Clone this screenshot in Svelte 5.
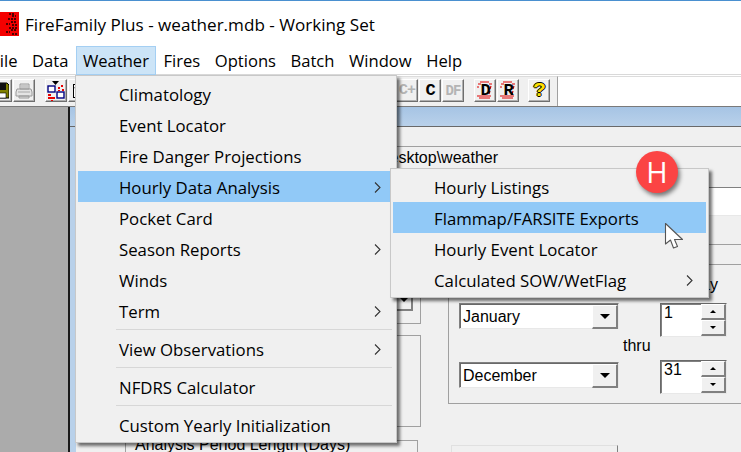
<script>
    const menus = ["File", "Data", "Weather", "Fires", "Options", "Batch", "Window", "Help"]

    const weatherItems = [
        { label: "Climatology" },
        { label: "Event Locator" },
        { label: "Fire Danger Projections" },
        { label: "Hourly Data Analysis", arrow: true, active: true },
        { label: "Pocket Card" },
        { label: "Season Reports", arrow: true },
        { label: "Winds" },
        { label: "Term", arrow: true },
        { sep: true },
        { label: "View Observations", arrow: true },
        { sep: true },
        { label: "NFDRS Calculator" },
        { sep: true },
        { label: "Custom Yearly Initialization" }
    ]

    const hourlyItems = [
        { label: "Hourly Listings" },
        { label: "Flammap/FARSITE Exports", active: true },
        { label: "Hourly Event Locator" },
        { label: "Calculated SOW/WetFlag", arrow: true }
    ]

    const dates = [
        { month: "January", day: "1" },
        { month: "December", day: "31" }
    ]
</script>

{#snippet chevron()}
    <svg class="chevron" width="7" height="11" viewBox="0 0 7 11"><path d="M1 .5 6 5.500 1 10.500" fill="none" stroke="#333" stroke-width="1.100"/></svg>
{/snippet}

{#snippet menuList(items)}
    {#each items as item}
        {#if item.sep}
            <div class="sep"></div>
        {:else}
            <div class="item" class:active={item.active}>
                <span>{item.label}</span>
                {#if item.arrow}{@render chevron()}{/if}
            </div>
        {/if}
    {/each}
{/snippet}

{#snippet redDashes()}
    <svg class="dashes" width="20" height="21" viewBox="0 0 20 21">
        <path d="M5 2h9M3 4h3M14 4h3M2 7h2M16 6l-1 3M15 11l-1 3M2 16h14M4 18h11" stroke="#e00000" stroke-width="1.200" fill="none"/>
    </svg>
{/snippet}

<div class="app">
    <header class="title">
        <svg class="logo" width="19" height="24" viewBox="0 0 19 24">
            <rect width="19" height="24" fill="#f40000"/>
            <path d="M9 2h5M12 4h4M8 7h8M11 10h6M6 12h4M12 13h5M9 16h8M11 18h5M6 20h4M12 22h5" stroke="#1a0000" stroke-width="1.300" stroke-dasharray="2 1"/>
        </svg>
        <span>FireFamily Plus - weather.mdb - Working Set</span>
    </header>

    <nav class="menubar">
        {#each menus as menu}
            <div class="menu" class:open={menu === "Weather"}>{menu}</div>
        {/each}
    </nav>

    <div class="toolbar">
        <div class="tools">
            <div class="btn save">
                <svg width="12" height="17" viewBox="0 0 12 17"><path d="M0 1h10l2 2v13H0z" fill="#808000" stroke="#000"/><rect y="1" width="9" height="7" fill="#111"/><rect x="2" y="11" width="7" height="5" fill="#fff" stroke="#000" stroke-width=".6"/></svg>
            </div>
            <div class="btn">
                <svg width="18" height="16" viewBox="0 0 18 16"><path d="M5 1h9v5H5zM2 6h14l1 3v4H1V9zM4 13h10v2H4z" fill="#e4e4e4" stroke="#9a9a9a"/><path d="M6 3h7M6 5h7M3 9h12" stroke="#a8a8a8"/></svg>
            </div>
            <div class="btn wizard">
                <svg width="18" height="20" viewBox="0 0 18 20">
                    <path d="M5 0h7L8.500 4z" fill="#000"/>
                    <rect x="1" y="5" width="7" height="6" fill="#fff" stroke="#000080" stroke-width="1.400"/>
                    <rect x="10" y="11" width="7" height="6" fill="#fff" stroke="#000080" stroke-width="1.400"/>
                    <path d="M1 13h3v2H1zM1 16h7v2H1zM4 19h2v1H4zM11 6h2v2h-2zM14 4h2v2h-2zM15 8h2v2h-2zM11 9h2v1h-2z" fill="#e80000"/>
                </svg>
            </div>
            <div class="btn">
                <svg width="12" height="16" viewBox="0 0 12 16"><rect x=".5" y="1.500" width="11" height="13" fill="#fff" stroke="#000"/><path d="M2 4l2 8 2-8" fill="none" stroke="#000"/></svg>
            </div>
            <div class="group-spacer"></div>
            <div class="btn glyph off">C+</div>
            <div class="btn glyph">C</div>
            <div class="btn glyph off small">DF</div>
            <div class="btn glyph split">{@render redDashes()}<b>D</b></div>
            <div class="btn glyph">{@render redDashes()}<b>R</b></div>
            <div class="btn glyph help">?</div>
        </div>
        <div class="toolbar-rest"></div>
    </div>

    <main class="workspace">
        <div class="mdi"></div>
        <section class="child">
            <div class="caption"></div>
            <div class="tabstrip"></div>
            <div class="pathrow"><span>C:\Users\fire\Desktop\weather</span></div>
            <div class="strip white"></div>
            <div class="strip"></div>
            <div class="strip last"></div>

            <div class="lower">
                <div class="leftcol">
                    <div class="box first"><div class="dropbtn"><i class="tri"></i></div></div>
                    <div class="box second"></div>
                    <div class="box third"><span>Analysis Period Length (Days)</span></div>
                </div>

                <div class="rightcol">
                    <div class="dategroup">
                        <div class="daylabel">Day</div>
                        {#each dates as date, i}
                            {#if i > 0}<div class="thru">thru</div>{/if}
                            <div class="daterow" class:end={i > 0}>
                                <div class="combo">
                                    <span>{date.month}</span>
                                    <div class="dropbtn"><i class="tri"></i></div>
                                </div>
                                <div class="spin">
                                    <span>{date.day}</span>
                                    <div class="spinbtns">
                                        <div class="spinbtn"><i class="up"></i></div>
                                        <div class="spinbtn"><i class="down"></i></div>
                                    </div>
                                </div>
                            </div>
                        {/each}
                    </div>
                    <div class="okbox"></div>
                </div>
            </div>
        </section>
    </main>

    <div class="popup weather">{@render menuList(weatherItems)}</div>
    <div class="popup hourly">{@render menuList(hourlyItems)}</div>

    <div class="badge">H</div>

    <svg class="cursor" width="20" height="29" viewBox="0 0 20 29">
        <path d="M1.500 1.500V22L6.500 18 9.500 26 13.500 24.500 10.500 17.500H18.500Z" fill="#fff" stroke="#555" stroke-width="1.100" stroke-linejoin="round"/>
    </svg>
</div>

<style>
    :global(body) {
        margin: 0;
        background: #fff;
    }

    .app {
        position: relative;
        width: 741px;
        height: 452px;
        overflow: hidden;
        display: flex;
        flex-direction: column;
        font-family: "Open Sans", "Noto Sans", sans-serif;
        color: #000;
    }

    .title {
        height: 44px;
        flex: none;
        padding-top: 1px;
        border-top: 1px solid #4a90d0;
        display: flex;
        align-items: center;
        gap: 6px;
        font-size: 17.100px;
        background: #fff;
    }

    .menubar {
        height: 29px;
        flex: none;
        display: flex;
        align-items: stretch;
        margin-left: -16px;
        border-bottom: 1px solid #d9d9d9;
        font-size: 16.600px;
        box-sizing: border-box;
    }

    .menu {
        padding: 0 6.250px;
        display: flex;
        align-items: center;
        border: 1px solid transparent;
    }

    .menu.open {
        background: #cce4f7;
        border-color: #a4cff3;
        margin-bottom: -1px;
    }

    .toolbar {
        height: 31px;
        flex: none;
        display: flex;
        border-bottom: 1px solid #7a7a7a;
        margin-top: 1px;
        box-sizing: border-box;
    }

    .tools {
        width: 568px;
        flex: none;
        margin-left: -10px;
        background: #f0f0f0;
        border-top: 1px solid #dcdcdc;
        border-right: 1px solid #a0a0a0;
        box-sizing: border-box;
        display: flex;
        align-items: center;
        padding-bottom: 2px;
    }

    .toolbar-rest {
        flex: 1;
        background: #fff;
        border-top: 1px solid #dcdcdc;
    }

    .btn {
        position: relative;
        width: 22px;
        height: 23px;
        flex: none;
        margin-right: 1px;
        box-sizing: border-box;
        background: #f0f0f0;
        border: 1px solid;
        border-color: #fff #6e6e6e #6e6e6e #fff;
        box-shadow: inset -1px -1px 0 #b0b0b0;
        display: flex;
        align-items: center;
        justify-content: center;
        overflow: hidden;
    }

    .save {
        justify-content: flex-end;
        padding-right: 2px;
    }

    .wizard {
        margin-left: 9px;
    }

    .group-spacer {
        width: 305px;
        flex: none;
    }

    .glyph {
        font-family: "Liberation Mono", monospace;
        font-size: 17px;
        font-weight: bold;
        letter-spacing: -1px;
    }

    .glyph b {
        position: relative;
    }

    .dashes {
        position: absolute;
        left: 0;
        top: 0;
    }

    .off {
        color: #b4b4b4;
        font-size: 15px;
    }

    .small {
        font-size: 14px;
    }

    .split {
        margin-left: 9px;
    }

    .help {
        margin-left: 8px;
        color: #ffe000;
        font-size: 21px;
        text-shadow: 1px 0 #000, -1px 0 #000, 0 1px #000, 0 -1px #000;
    }

    .workspace {
        flex: 1;
        min-height: 0;
        display: flex;
    }

    .mdi {
        width: 68px;
        flex: none;
        background: #ababab;
    }

    .child {
        flex: 1;
        min-width: 0;
        border-left: 2px solid #1a1a1a;
        box-shadow: inset 6px 0 0 #b9d1ea;
        background: #f0f0f0;
        display: flex;
        flex-direction: column;
        font-family: "Liberation Sans", Arial, sans-serif;
        font-size: 16px;
    }

    .caption {
        height: 19px;
        flex: none;
        background: linear-gradient(#a6c4e4, #b9d1ea);
        border-bottom: 1px solid #696969;
    }

    .tabstrip {
        height: 19px;
        flex: none;
        border-bottom: 1px solid #a0a0a0;
        margin-left: 6px;
    }

    .pathrow {
        height: 40px;
        flex: none;
        width: 428px;
        box-sizing: border-box;
        padding-top: 2px;
        text-align: right;
        white-space: nowrap;
    }

    .strip {
        height: 29px;
        flex: none;
        box-sizing: border-box;
        border-bottom: 1px solid #a0a0a0;
        margin-left: 6px;
    }

    .strip.white {
        background: #fff;
        border-top: 1px solid #808080;
        border-bottom: 1px solid #e8e8e8;
    }

    .strip.last {
        height: 20px;
    }

    .lower {
        flex: 1;
        min-height: 0;
        display: flex;
    }

    .leftcol {
        width: 351px;
        flex: none;
        display: flex;
        flex-direction: column;
        align-items: flex-end;
    }

    .box {
        flex: none;
        box-sizing: border-box;
        border: 1px solid #a0a0a0;
    }

    .box.first {
        width: 120px;
        height: 59px;
        border-top: 0;
        display: flex;
        justify-content: flex-end;
        align-items: flex-end;
        padding: 0 7px 12px 0;
    }

    .box.first .dropbtn {
        width: 17px;
        height: 22px;
    }

    .box.second {
        width: 120px;
        height: 92px;
        margin-top: 11px;
    }

    .box.third {
        width: 293px;
        height: 40px;
        margin: 13px 3px 0 0;
        padding: 0 0 0 9px;
        white-space: nowrap;
        line-height: 8px;
    }

    .rightcol {
        flex: 1;
        min-width: 0;
        margin-left: 27px;
    }

    .dategroup {
        box-sizing: border-box;
        height: 139px;
        border-left: 1px solid #a0a0a0;
        border-bottom: 1px solid #a0a0a0;
        padding-left: 10px;
    }

    .daylabel {
        height: 38px;
        box-sizing: border-box;
        padding: 11px 23px 0 0;
        text-align: right;
    }

    .daterow {
        display: flex;
        align-items: flex-start;
        gap: 41px;
    }

    .daterow.end .combo {
        margin-top: 2px;
    }

    .thru {
        height: 23px;
        margin: 0 0 0 164px;
        line-height: 17px;
    }

    .combo {
        width: 160px;
        height: 26px;
        box-sizing: border-box;
        background: #fff;
        border: 1px solid;
        border-color: #808080 #e8e8e8 #e8e8e8 #808080;
        box-shadow: inset 1px 1px 0 #696969;
        display: flex;
        justify-content: space-between;
        align-items: center;
        padding: 1px 0 0 3px;
    }

    .dropbtn {
        box-sizing: border-box;
        width: 26px;
        height: 24px;
        background: #f0f0f0;
        border: 1px solid #fff;
        border-right: 2px solid #808080;
        border-bottom: 2px solid #808080;
        display: flex;
        align-items: center;
        justify-content: center;
    }

    .tri {
        width: 0;
        height: 0;
        border: 5px solid transparent;
        border-top: 5px solid #000;
        border-bottom: 0;
    }

    .spin {
        width: 67px;
        height: 34px;
        box-sizing: border-box;
        background: #fff;
        border: 1px solid;
        border-color: #696969 #e8e8e8 #e8e8e8 #696969;
        box-shadow: inset 1px 1px 0 #808080;
        display: flex;
        justify-content: space-between;
        padding-left: 3px;
    }

    .spinbtns {
        width: 25px;
        display: flex;
        flex-direction: column;
    }

    .spinbtn {
        flex: 1;
        box-sizing: border-box;
        background: #f0f0f0;
        border: 1px solid #fff;
        border-right: 2px solid #808080;
        border-bottom: 2px solid #808080;
        display: flex;
        align-items: center;
        justify-content: center;
    }

    .up,
    .down {
        width: 0;
        height: 0;
        border: 3px solid transparent;
    }

    .up {
        border-top: 0;
        border-bottom-color: #000;
    }

    .down {
        border-bottom: 0;
        border-top-color: #000;
    }

    .okbox {
        width: 167px;
        height: 20px;
        margin: 41px 0 0 3px;
        box-sizing: border-box;
        border: 1px solid #e0e0e0;
        border-right-color: #808080;
        border-bottom: 0;
    }

    .popup {
        position: absolute;
        box-sizing: border-box;
        background: #f0f0f0;
        border: 1px solid #c8c8c8;
        padding: 2px;
        box-shadow: 3px 3px 3px rgba(0, 0, 0, .55);
        font-size: 16.800px;
    }

    .weather {
        left: 75px;
        top: 75px;
        width: 322px;
    }

    .hourly {
        left: 390px;
        top: 168px;
        width: 319px;
    }

    .item {
        height: 31px;
        box-sizing: border-box;
        padding: 1px 13px 0 41px;
        display: flex;
        align-items: center;
        justify-content: space-between;
    }

    .item.active {
        background: #91c9f7;
    }

    .chevron {
        flex: none;
    }

    .sep {
        height: 1px;
        margin: 3px 2px 3px 38px;
        background: #d7d7d7;
    }

    .badge {
        position: absolute;
        left: 636px;
        top: 151px;
        width: 42px;
        height: 42px;
        border-radius: 50%;
        background: #fb4444;
        color: #fff;
        font-size: 29px;
        line-height: 42px;
        text-align: center;
        box-shadow: 2px 3px 4px rgba(0, 0, 0, .5);
    }

    .cursor {
        position: absolute;
        left: 664px;
        top: 222px;
    }
</style>
